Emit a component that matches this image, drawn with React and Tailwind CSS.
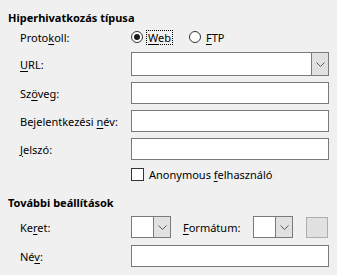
import React from 'react';

const U = ({ children }) => <span className="underline underline-offset-2">{children}</span>;

function Chevron() {
  return (
    <svg width="9" height="5" viewBox="0 0 9 5" className="block">
      <path d="M0.5 0.5 L4.5 4.5 L8.5 0.5" fill="none" stroke="#5a5a5a" strokeWidth="1" />
    </svg>
  );
}

function TextBox({ className = '' }) {
  return <div className={`h-[22px] bg-white border border-[#7a7a7a] ${className}`} />;
}

function Combo({ className = '', h = 'h-[22px]' }) {
  return (
    <div className={`${h} flex bg-white border border-[#7a7a7a] ${className}`}>
      <div className="flex-1" />
      <div className="w-[17px] bg-[#e1e1e1] border-l border-[#7a7a7a] flex items-center justify-center">
        <Chevron />
      </div>
    </div>
  );
}

function Radio({ checked }) {
  return (
    <div className="w-[12px] h-[12px] rounded-full border border-[#333] bg-white flex items-center justify-center">
      {checked && <div className="w-[6px] h-[6px] rounded-full bg-[#1a1a1a]" />}
    </div>
  );
}

function Row({ label, children, mt, h = 'h-[22px]' }) {
  return (
    <div className={`flex items-center ${h} ${mt}`}>
      <div className="w-[123px] shrink-0 pl-[12px] whitespace-nowrap">{label}</div>
      <div className="flex-1 flex items-center">{children}</div>
    </div>
  );
}

export default function App() {
  return (
    <div className="w-[337px] h-[275px] bg-[#f0f0f0] text-[11px] text-black pl-[8px] pr-[8px] overflow-hidden font-['Noto_Sans',sans-serif] leading-none">
      <div className="flex flex-col">
        <div className="h-[16px] mt-[9px] flex items-center font-bold">Hiperhivatkozás típusa</div>

        <Row mt="mt-[2px]" h="h-[20px]" label={<>Proto<U>k</U>oll:</>}>
          <div className="flex items-center">
            <Radio checked />
            <span className="ml-[3px] px-[2px] py-[2px] outline-1 outline-dotted outline-black -outline-offset-1"><U>W</U>eb</span>
            <div className="ml-[16px]"><Radio /></div>
            <span className="ml-[5px]"><U>F</U>TP</span>
          </div>
        </Row>

        <Row mt="mt-[5px]" h="h-[24px]" label={<><U>U</U>RL:</>}>
          <Combo className="w-[198px]" h="h-[24px]" />
        </Row>

        <Row mt="mt-[6px]" label={<>Sz<U>ö</U>veg:</>}>
          <TextBox className="w-[198px]" />
        </Row>

        <Row mt="mt-[6px]" label={<>Bejelentkezési <U>n</U>év:</>}>
          <TextBox className="w-[198px]" />
        </Row>

        <Row mt="mt-[6px]" label={<><U>J</U>elszó:</>}>
          <TextBox className="w-[198px]" />
        </Row>

        <Row mt="mt-[4px]" h="h-[20px]" label={null}>
          <div className="w-[13px] h-[13px] border border-[#333] bg-white" />
          <span className="ml-[5px]">Anonymous <U>f</U>elhasználó</span>
        </Row>

        <div className="h-[16px] mt-[10px] flex items-center font-bold">További beállítások</div>

        <Row mt="mt-[6px]" label={<>Ke<U>r</U>et:</>}>
          <Combo className="w-[40px]" />
          <span className="ml-[12px] w-[70px]"><U>F</U>ormátum:</span>
          <Combo className="w-[40px]" />
          <div className="ml-[13px] w-[22px] h-[21px] bg-[#e1e1e1] border border-[#adadad]" />
        </Row>

        <Row mt="mt-[7px]" label={<>Né<U>v</U>:</>}>
          <TextBox className="w-[198px]" />
        </Row>
      </div>
    </div>
  );
}
